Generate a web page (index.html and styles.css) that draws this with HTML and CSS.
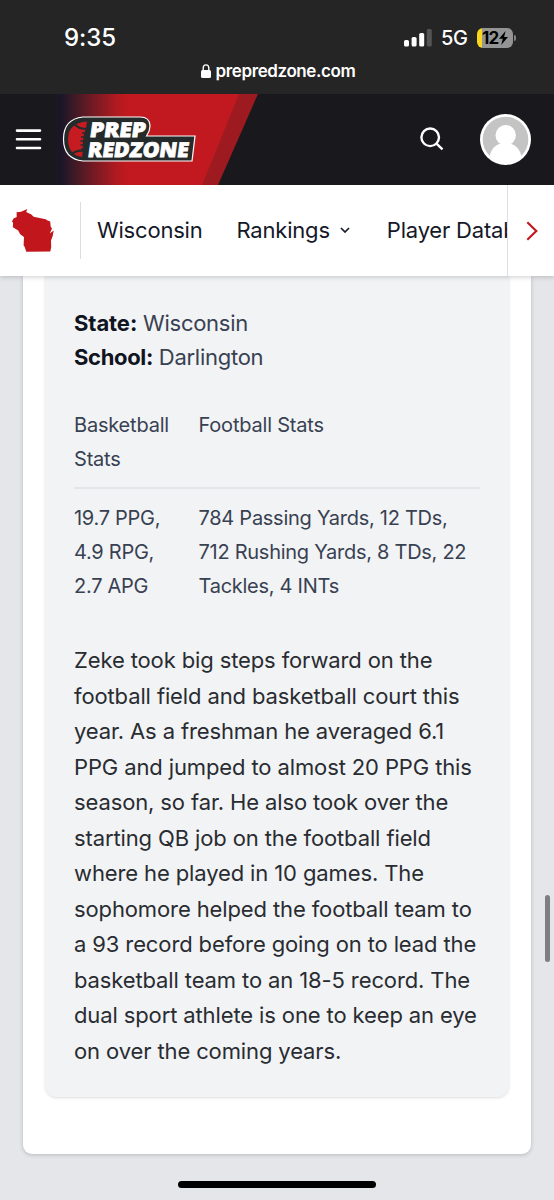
FILE: index.html
```html
<!DOCTYPE html>
<html lang="en">
<head>
<meta charset="utf-8">
<title>Prep Redzone</title>
<link rel="stylesheet" href="styles.css">
</head>
<body>
<div class="phone">
  <header class="system">
    <div class="status">
      <span class="clock">9:35</span>
      <div class="indicators">
        <svg class="signal" width="28" height="18" viewBox="0 0 28 18"><g fill="#fff"><rect x="0" y="11" width="5" height="6.5" rx="1.6"/><rect x="7.6" y="8" width="5" height="9.5" rx="1.6"/><rect x="15.2" y="4" width="5" height="13.5" rx="1.6"/></g><rect x="22.8" y="0" width="5" height="17.5" rx="1.6" fill="#545454"/></svg>
        <span class="network">5G</span>
        <div class="battery"><span>12</span><svg width="9" height="14" viewBox="0 0 9 14"><path d="M6.6 0 0 7.8h3.8L2.2 14 9 5.9H5.1z"/></svg></div>
      </div>
    </div>
    <div class="address">
      <svg width="10" height="14" viewBox="0 0 10 14"><rect x="0" y="6" width="10" height="8" rx="1.6" fill="#fff"/><path d="M2.2 7V4a2.8 3.1 0 0 1 5.6 0v3" fill="none" stroke="#fff" stroke-width="1.4"/></svg>
      <span>prepredzone.com</span>
    </div>
  </header>

  <div class="brandbar">
    <svg class="banner" width="260" height="91" viewBox="0 0 260 91">
      <defs><linearGradient id="fade" gradientUnits="userSpaceOnUse" x1="52" y1="0" x2="128" y2="0"><stop offset="0" stop-color="#19181d"/><stop offset=".13" stop-color="#1c1628"/><stop offset=".3" stop-color="#401a26"/><stop offset=".55" stop-color="#751a23"/><stop offset=".85" stop-color="#b01a20"/><stop offset="1" stop-color="#c1191f"/></linearGradient></defs>
      <path d="M0 0H258L218 91H0z" fill="#9d1b20"/>
      <path d="M0 0H239L202 91H0z" fill="url(#fade)"/>
      <g fill="none" stroke="#fff" stroke-width="2.6" stroke-linecap="round"><path d="M17 36.6H40M17 45.2H40M17 54H40"/></g>
      <path d="M83 23H140Q150 23 150 32 150 37 146.500 42H195L192 67H83Q63.500 65 63.500 45T83 23z" fill="#252b2b" stroke="#fff" stroke-width="1.200"/>
      <path d="M87 27.500Q68 29 68 45 68 61 82 63z" fill="#c51b21"/>
      <path d="M75 30.500Q80 36 88 34.500M72 60Q77 55.500 85 57" fill="none" stroke="#252b2b" stroke-width="2"/>
      <path d="M86 36Q83 44 83.500 58M82 39h5M81 43h5M80.500 47h5M80.500 51h5M81 55h5" fill="none" stroke="#252b2b" stroke-width="1.400"/>
      <g class="wordmark" fill="#fff" stroke="#fff" stroke-width=".8"><text transform="translate(89 42.500) skewX(-8)" textLength="56" lengthAdjust="spacingAndGlyphs">PREP</text><text transform="translate(87 62.500) skewX(-8)" textLength="101" lengthAdjust="spacingAndGlyphs">REDZONE</text></g>
    </svg>
    <svg class="search" width="24" height="24" viewBox="0 0 24 24" fill="none" stroke="#fff" stroke-width="2.400"><circle cx="10.200" cy="10.300" r="8.800"/><path d="m16.500 16.600 6 5.700"/></svg>
    <svg class="avatar" width="51" height="51" viewBox="0 0 51 51"><defs><clipPath id="disc"><circle cx="25.500" cy="25.500" r="23"/></clipPath></defs><circle cx="25.500" cy="25.500" r="25.500" fill="#fff"/><circle cx="25.500" cy="25.500" r="22.800" fill="#c4c4c4"/><g clip-path="url(#disc)" fill="#fff"><circle cx="25.700" cy="21.300" r="10.200"/><path d="M8.500 51Q9 29 25.500 29T42.500 51z"/></g></svg>
  </div>

  <nav class="tabs">
    <div class="state"><svg width="42" height="43" viewBox="0 0 42 43"><path d="M4.600 3.200 9 2.800 15.300 0 14.200 3l5.200 2.400 2.200 2.300 12.100 2.500 1.800 1.300 2.700 1 .5 5.200 1.300 1.700-2.300 5 4-2.900-1 5.500-1.700 4.600.2 6.400-.9 4.500-24 .2-1.800-5.300-.9-.8.4-8.500-3.800-2.800-2-3.800-5.300-3.300L1 13.800 0 12.500l1.500-3L4.700 8z" fill="#c2161d"/></svg></div>
    <div class="links">
      <a>Wisconsin</a>
      <a class="rankings">Rankings</a>
      <svg class="caret" width="10" height="6" viewBox="0 0 10 6"><path d="m1 1 4 4 4-4" fill="none" stroke="#181d29" stroke-width="1.700"/></svg>
      <a>Player Database</a>
    </div>
    <div class="next"><svg width="12" height="20" viewBox="0 0 12 20"><path d="m1.300 1.300 9 8.700-9 8.700" fill="none" stroke="#c01b21" stroke-width="2.200"/></svg></div>
  </nav>

  <main class="page">
    <div class="sheet">
      <article class="card">
        <div class="facts">
          <p><b>State:</b> <span>Wisconsin</span></p>
          <p><b class="tight">School:</b> <span>Darlington</span></p>
        </div>
        <div class="stats head"><div>Basketball<br>Stats</div><div>Football Stats</div></div>
        <div class="stats"><div>19.7 PPG,<br>4.9 RPG,<br>2.7 APG</div><div>784 Passing Yards, 12 TDs,<br>712 Rushing Yards, 8 TDs, 22<br>Tackles, 4 INTs</div></div>
        <p class="story">Zeke took big steps forward on the<br>football field and basketball court this<br>year. As a freshman he averaged 6.1<br>PPG and jumped to almost 20 PPG this<br>season, so far. He also took over the<br>starting QB job on the football field<br>where he played in 10 games. The<br>sophomore helped the football team to<br>a 93 record before going on to lead the<br>basketball team to an 18-5 record. The<br>dual sport athlete is one to keep an eye<br>on over the coming years.</p>
      </article>
    </div>
  </main>
  <div class="scrollbar"></div>
  <div class="home"></div>
</div>
</body>
</html>
```
FILE: styles.css
```css
* { box-sizing: border-box; }
body { margin: 0; font-family: Inter, "Liberation Sans", sans-serif; }
p { margin: 0; }
.phone { position: relative; width: 554px; height: 1200px; overflow: hidden; background: #e5e6ea; display: flex; flex-direction: column; }
.system { height: 94px; background: #252525; color: #fff; flex: none; }
.status { display: flex; justify-content: space-between; padding: 24px 41px 0 64px; height: 60px; }
.clock { font-size: 24px; font-weight: 500; line-height: 27px; letter-spacing: -.1px; }
.indicators { display: flex; height: 27px; align-items: center; }
.signal { margin-right: 9px; }
.network { font-size: 20px; font-weight: 500; letter-spacing: -.3px; width: 36px; }
.battery { position: relative; display: flex; align-items: center; gap: 1px; width: 36px; height: 20px; padding-left: 5px; border-radius: 6px; background: linear-gradient(90deg, #f8d71c 5px, #949494 5px); color: #000; font-size: 17px; font-weight: 700; letter-spacing: -.8px; }
.battery::after { content: ""; position: absolute; right: -3px; top: 7px; width: 2px; height: 6px; border-radius: 0 2px 2px 0; background: #858585; }
.address { display: flex; justify-content: center; align-items: center; gap: 5px; height: 22px; padding-left: 2px; font-size: 17px; font-weight: 600; letter-spacing: -.4px; }
.brandbar { position: relative; z-index: 3; display: flex; align-items: center; height: 91px; flex: none; background: #19181d; }
.banner { display: block; flex: none; margin-right: 160px; }
.wordmark { font: 800 20.5px "Open Sans", sans-serif; }
.search { margin: 0 36px 2px 0; flex: none; }
.avatar { flex: none; }
.tabs { position: relative; z-index: 2; display: flex; height: 91px; flex: none; background: #fff; box-shadow: 0 1px 5px #0003; }
.state { width: 81px; height: 57px; margin-top: 17px; padding: 7px 0 0 11.5px; border-right: 1px solid #dcdde0; flex: none; }
.links { display: flex; align-items: center; width: 426px; padding: 0 0 2px 16px; overflow: hidden; white-space: nowrap; color: #141827; font-size: 22px; letter-spacing: -.2px; flex: none; }
.rankings { margin-left: 34px; }
.caret { margin: 0 37px 0 10px; flex: none; }
.next { display: flex; flex: 1; align-items: center; padding-left: 18px; border-left: 1px solid #dcdfe4; }
.page { padding: 0 23px; }
.sheet { height: 878px; padding: 0 22px; background: #fff; border-radius: 0 0 9px 9px; box-shadow: 0 1px 4px #0003; }
.card { height: 821px; padding: 30px 29px 0; background: #f2f3f5; border-radius: 0 0 12px 12px; box-shadow: 0 1px 3px #0002; }
.facts { font-size: 22px; line-height: 34px; letter-spacing: -.27px; color: #384152; }
.facts b { color: #10141f; font-weight: 700; letter-spacing: -.08px; }
.facts .tight { letter-spacing: -.35px; }
.stats { display: grid; grid-template-columns: 124.5px 1fr; font-size: 20px; line-height: 34.1px; letter-spacing: -.27px; color: #384152; white-space: nowrap; }
.head { margin-top: 34px; padding-bottom: 11px; border-bottom: 2px solid #e3e5e9; letter-spacing: -.2px; }
.head + .stats { padding-top: 12px; }
.story { margin-top: 39.5px; font-size: 22px; line-height: 35.55px; letter-spacing: -.12px; color: #292c31; white-space: nowrap; }
.scrollbar { position: absolute; right: 4px; top: 895px; width: 5px; height: 67px; border-radius: 3px; background: #7e7f82; }
.home { position: absolute; left: 178px; top: 1181px; width: 198px; height: 7px; border-radius: 4px; background: #000; }
```
